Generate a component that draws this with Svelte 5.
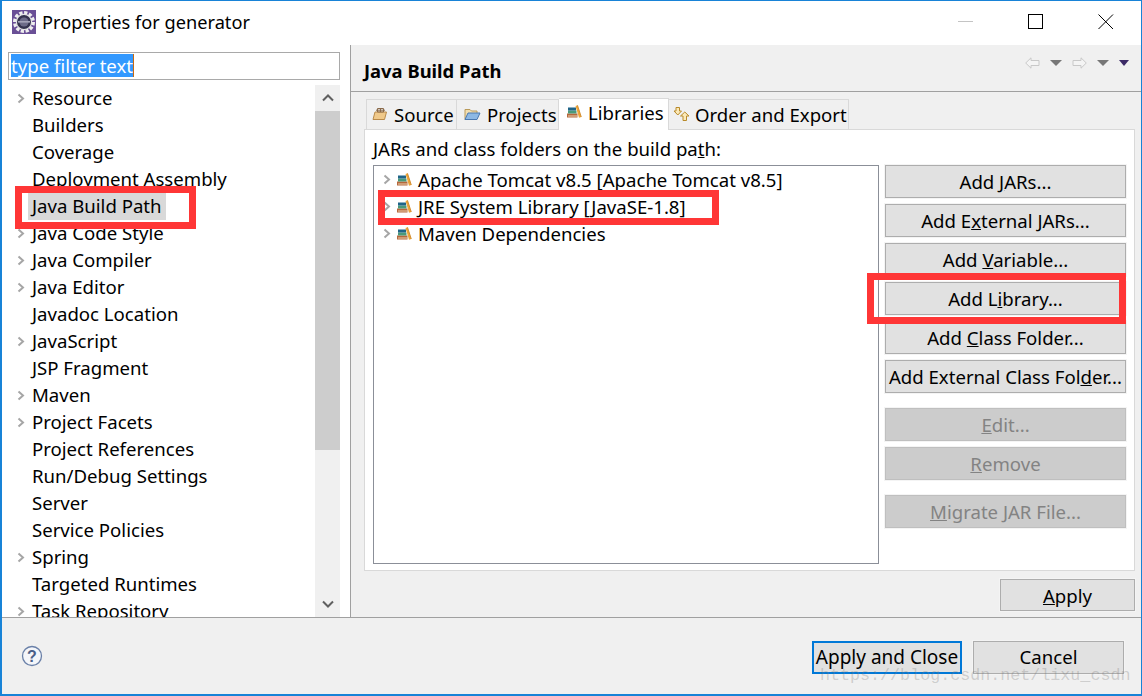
<script>
  const pages = [
    { name: 'Resource', more: true },
    { name: 'Builders' },
    { name: 'Coverage' },
    { name: 'Deployment Assembly' },
    { name: 'Java Build Path', selected: true },
    { name: 'Java Code Style', more: true },
    { name: 'Java Compiler', more: true },
    { name: 'Java Editor', more: true },
    { name: 'Javadoc Location' },
    { name: 'JavaScript', more: true },
    { name: 'JSP Fragment' },
    { name: 'Maven', more: true },
    { name: 'Project Facets', more: true },
    { name: 'Project References' },
    { name: 'Run/Debug Settings' },
    { name: 'Server' },
    { name: 'Service Policies' },
    { name: 'Spring', more: true },
    { name: 'Targeted Runtimes' },
    { name: 'Task Repository', more: true }
  ];

  const libraries = [
    'Apache Tomcat v8.5 [Apache Tomcat v8.5]',
    'JRE System Library [JavaSE-1.8]',
    'Maven Dependencies'
  ];
</script>

{#snippet chevron()}
  <svg class="chevron" width="8" height="11" viewBox="0 0 8 11">
    <path d="M1.5 1.5 L6 5.5 L1.5 9.5" fill="none" stroke="#a6a6a6" stroke-width="2" />
  </svg>
{/snippet}

{#snippet books()}
  <svg width="16" height="14" viewBox="0 0 16 14">
    <rect x="1" y="8.5" width="10.5" height="4" fill="#b5683c" />
    <rect x="2" y="10.5" width="9.5" height="1" fill="#ecd0ae" />
    <rect x="2" y="5.5" width="8.5" height="3" fill="#4a9a7a" />
    <rect x="2" y="2.5" width="8" height="3" fill="#1f6488" />
    <path d="M9.5 1 L11.5 0.3 L15.3 12 L13 12.8 Z" fill="#eda63a" />
    <path d="M11.5 0.3 L15.3 12" fill="none" stroke="#c97f1e" stroke-width="0.8" />
  </svg>
{/snippet}

<div class="window">
  <header class="titlebar">
    <svg class="app-icon" width="24" height="24" viewBox="0 0 24 24">
      <rect width="24" height="24" fill="#6a4f96" />
      <circle cx="12" cy="12" r="9.2" fill="none" stroke="#efefef" stroke-width="3.6" stroke-dasharray="3.2 1.6" />
      <circle cx="12" cy="12" r="7.6" fill="#34324e" stroke="#e4e4e4" stroke-width="1.2" />
      <circle cx="12" cy="12" r="4.6" fill="#6d6b88" />
      <rect x="6" y="11" width="12" height="1.6" fill="#a5a3b8" />
    </svg>
    <span class="title">Properties for generator</span>
    <div class="window-controls">
      <svg width="16" height="16" viewBox="0 0 16 16"><path d="M0 7.5 H15" stroke="#c4c4c4" /></svg>
      <svg width="16" height="16" viewBox="0 0 16 16"><rect x="0.5" y="0.5" width="14" height="14" fill="none" stroke="#000" /></svg>
      <svg width="16" height="16" viewBox="0 0 16 16"><path d="M0.5 0.5 L15 15 M15 0.5 L0.5 15" stroke="#000" /></svg>
    </div>
  </header>

  <div class="main">
    <aside class="left">
      <div class="filter"><span class="selected-text">type filter text</span></div>
      <div class="tree-area">
        <ul class="tree">
          {#each pages as page}
            <li class="row">
              <span class="twist">{#if page.more}{@render chevron()}{/if}</span>
              <span class="label" class:selected={page.selected}>{page.name}</span>
            </li>
          {/each}
        </ul>
        <div class="scrollbar">
          <div class="arrow">
            <svg width="12" height="8" viewBox="0 0 12 8"><path d="M1 6.5 L6 1.5 L11 6.5" fill="none" stroke="#606060" stroke-width="2" /></svg>
          </div>
          <div class="thumb"></div>
          <div class="track"></div>
          <div class="arrow">
            <svg width="12" height="8" viewBox="0 0 12 8"><path d="M1 1.5 L6 6.5 L11 1.5" fill="none" stroke="#606060" stroke-width="2" /></svg>
          </div>
        </div>
      </div>
    </aside>

    <section class="right">
      <div class="page-head">
        <h1>Java Build Path</h1>
        <div class="nav">
          <svg width="15" height="12" viewBox="0 0 15 12"><path d="M0.7 6 L6 0.8 V3.5 H14 V8.5 H6 V11.2 Z" fill="#f4f4f4" stroke="#c8c8c8" /></svg>
          <i class="drop"></i>
          <svg width="15" height="12" viewBox="0 0 15 12"><path d="M14.3 6 L9 0.8 V3.5 H1 V8.5 H9 V11.2 Z" fill="#f4f4f4" stroke="#c8c8c8" /></svg>
          <i class="drop"></i>
          <i class="drop dark"></i>
        </div>
      </div>

      <div class="page-body">
        <div class="tabs">
          <div class="tab source">
            <svg width="16" height="14" viewBox="0 0 16 14">
              <path d="M1 12.5 L3 5 H14.5 L12.5 12.5 Z" fill="#f0c98a" stroke="#b98a4a" />
              <path d="M5.5 1.5 H11.5 V5 H5.5 Z M8.5 1.5 V5 M4 3.2 H13" fill="none" stroke="#8a6a4a" />
            </svg>
            Source
          </div>
          <div class="tab projects">
            <svg width="17" height="14" viewBox="0 0 17 14">
              <path d="M1 12.5 V2.5 H6 L7.5 4 H13 V6" fill="#f2deb0" stroke="#b99a5a" />
              <path d="M1 12.5 L4 6 H16 L13 12.5 Z" fill="#8db8e4" stroke="#4a78b0" />
            </svg>
            Projects
          </div>
          <div class="tab active">{@render books()} Libraries</div>
          <div class="tab order">
            <svg width="17" height="16" viewBox="0 0 17 16">
              <path d="M3 1.5 H6.5 V5 H8.5 L4.8 9 L1 5 H3 Z" fill="#fbe9b8" stroke="#b98a2a" />
              <path d="M10 14.5 H13.5 V10 H16 L11.8 6 L7.5 10 H10 Z" fill="#fbe9b8" stroke="#b98a2a" />
            </svg>
            Order and Export
          </div>
        </div>

        <div class="tab-panel">
          <p class="panel-label">JARs and class folders on the build pa<u>t</u>h:</p>
          <div class="panel-row">
            <ul class="lib-list">
              {#each libraries as lib}
                <li class="lib">
                  {@render chevron()}
                  {@render books()}
                  <span>{lib}</span>
                </li>
              {/each}
            </ul>
            <div class="actions">
              <button>Add <u>J</u>ARs...</button>
              <button>Add E<u>x</u>ternal JARs...</button>
              <button>Add <u>V</u>ariable...</button>
              <button>Add L<u>i</u>brary...</button>
              <button>Add <u>C</u>lass Folder...</button>
              <button>Add External Class Fol<u>d</u>er...</button>
              <button class="spaced" disabled><u>E</u>dit...</button>
              <button disabled><u>R</u>emove</button>
              <button class="spaced" disabled><u>M</u>igrate JAR File...</button>
            </div>
          </div>
        </div>

        <div class="apply-row">
          <button class="apply"><u>A</u>pply</button>
        </div>
      </div>
    </section>
  </div>

  <footer class="footer">
    <svg class="help" width="22" height="22" viewBox="0 0 22 22">
      <circle cx="11" cy="11" r="9.5" fill="#f4f6fa" stroke="#6a80a8" stroke-width="1.3" />
      <text x="11" y="16.5" text-anchor="middle" class="help-mark">?</text>
    </svg>
    <div class="footer-buttons">
      <button class="default">Apply and Close</button>
      <button class="cancel">Cancel</button>
    </div>
  </footer>

  <!-- red annotation boxes drawn over the screenshot -->
  <div class="mark mark-tree"></div>
  <div class="mark mark-lib"></div>
  <div class="mark mark-btn"></div>
  <div class="watermark">https://blog.csdn.net/lixu_csdn</div>
</div>

<style>
  :global(body) {
    margin: 0;
    background: #f0f0f0;
  }

  .window {
    position: relative;
    box-sizing: border-box;
    width: 1142px;
    height: 696px;
    display: flex;
    flex-direction: column;
    overflow: hidden;
    border: solid #1883d7;
    border-width: 1px 1px 2px 2px;
    background: #fff;
    font-family: "Noto Sans", "Open Sans", sans-serif;
    font-size: 18.6px;
    color: #000;
  }

  .titlebar {
    height: 44px;
    flex: none;
    display: flex;
    align-items: center;
    padding: 0 0 2px 10px;
    box-sizing: border-box;
    background: #fff;
  }

  .title {
    margin-left: 6px;
    font-size: 18.2px;
  }

  .window-controls {
    margin-left: auto;
    display: flex;
    gap: 54px;
    padding-right: 27px;
  }

  .main {
    flex: 1;
    display: flex;
    min-height: 0;
  }

  .left {
    width: 348px;
    flex: none;
    box-sizing: border-box;
    padding: 7px 10px 0 6px;
    display: flex;
    flex-direction: column;
    background: #fff;
  }

  .filter {
    height: 28px;
    flex: none;
    box-sizing: border-box;
    border: 1px solid #a9a9a9;
    padding: 0 0 2px 2px;
    display: flex;
    align-items: center;
  }

  .selected-text {
    background: #3399ff;
    color: #fff;
    line-height: 23px;
    border-right: 1px solid #c86a10;
  }

  .tree-area {
    flex: 1;
    min-height: 0;
    display: flex;
    margin-top: 5px;
  }

  .tree {
    flex: 1;
    list-style: none;
    margin: 0;
    padding: 0 0 0 9px;
    overflow: hidden;
  }

  .row {
    height: 27px;
    display: flex;
    align-items: center;
  }

  .twist {
    width: 11px;
    flex: none;
    display: flex;
  }

  .label {
    padding: 0 4px 2px;
    line-height: 25px;
    white-space: nowrap;
  }

  .label.selected {
    background: #d9d9d9;
  }

  .scrollbar {
    width: 25px;
    flex: none;
    display: flex;
    flex-direction: column;
    background: #f0f0f0;
  }

  .arrow {
    height: 26px;
    flex: none;
    display: flex;
    align-items: center;
    justify-content: center;
  }

  .thumb {
    height: 339px;
    flex: none;
    background: #cdcdcd;
  }

  .track {
    flex: 1;
  }

  .right {
    flex: 1;
    min-width: 0;
    display: flex;
    flex-direction: column;
    border-left: 1px solid #a0a0a0;
    background: #f0f0f0;
  }

  .page-head {
    height: 47px;
    flex: none;
    box-sizing: border-box;
    display: flex;
    justify-content: space-between;
    border-bottom: 1px solid #a0a0a0;
    padding: 0 12px 0 13px;
  }

  h1 {
    margin: 13px 0 0;
    font-size: 18.4px;
    line-height: 26px;
    font-weight: 700;
  }

  .nav {
    display: flex;
    align-items: center;
    gap: 10px;
    height: 36px;
  }

  .drop {
    width: 0;
    height: 0;
    border: 6px solid transparent;
    border-top: 6px solid #777;
    border-bottom: 0;
  }

  .drop.dark {
    border-width: 6px 5px 0;
    border-top-color: #3c2a66;
  }

  .page-body {
    flex: 1;
    min-height: 0;
    padding: 7px 6px 0 13px;
    display: flex;
    flex-direction: column;
  }

  .tabs {
    height: 30px;
    flex: none;
    display: flex;
    align-items: flex-end;
    padding-left: 2px;
  }

  .tab {
    height: 30px;
    box-sizing: border-box;
    display: flex;
    align-items: center;
    gap: 6px;
    padding: 0 0 1px 6px;
    background: #f0f0f0;
    border: 1px solid #d9d9d9;
    border-bottom: 0;
    border-left: 0;
    white-space: nowrap;
  }

  .tab.source {
    width: 91px;
    padding-left: 5px;
    border-left: 1px solid #d9d9d9;
  }

  .tab.projects {
    width: 102px;
    padding-left: 7px;
  }

  .tab.active {
    width: 110px;
    height: 32px;
    background: #fff;
    margin-bottom: -1px;
    position: relative;
    padding: 0 0 5px 7px;
    z-index: 1;
  }

  .tab.order {
    width: 180px;
    gap: 5px;
    padding-left: 4px;
  }

  .tab-panel {
    height: 442px;
    flex: none;
    box-sizing: border-box;
    background: #fff;
    border: 1px solid #d9d9d9;
    padding: 7px 8px 6px 8px;
    display: flex;
    flex-direction: column;
  }

  .panel-label {
    margin: 0;
    line-height: 24px;
    height: 28px;
    flex: none;
  }

  .panel-row {
    flex: 1;
    min-height: 0;
    display: flex;
    gap: 6px;
  }

  .lib-list {
    width: 506px;
    flex: none;
    box-sizing: border-box;
    list-style: none;
    margin: 0;
    padding: 0 0 0 9px;
    border: 1px solid #8b8f98;
  }

  .lib {
    height: 27px;
    display: flex;
    align-items: center;
    gap: 5px;
    white-space: nowrap;
  }

  .lib span {
    margin-left: 1px;
  }

  .actions {
    flex: 1;
    display: flex;
    flex-direction: column;
    gap: 6px;
  }

  button {
    box-sizing: border-box;
    height: 33px;
    padding: 0;
    flex: none;
    font: inherit;
    color: #000;
    background: #e1e1e1;
    border: 1px solid #adadad;
    outline: 1px solid #f4f4f4;
  }

  button:disabled {
    background: #cccccc;
    border-color: #bfbfbf;
    color: #838383;
  }

  .spaced {
    margin-top: 9px;
  }

  .apply-row {
    display: flex;
    justify-content: flex-end;
    margin-top: 8px;
  }

  .apply {
    width: 135px;
    height: 32px;
  }

  .footer {
    height: 77px;
    flex: none;
    box-sizing: border-box;
    display: flex;
    align-items: center;
    justify-content: space-between;
    border-top: 1px solid #a0a0a0;
    background: #f0f0f0;
    padding: 0 17px 0 19px;
  }

  .help-mark {
    font-family: "Liberation Sans", sans-serif;
    font-size: 16px;
    font-weight: 700;
    fill: #4a5f88;
  }

  .footer-buttons {
    display: flex;
    gap: 11px;
    margin-top: 2px;
  }

  .footer-buttons button {
    width: 151px;
  }

  .footer-buttons .cancel {
    padding-bottom: 2px;
  }

  .footer-buttons .default {
    border: 2px solid #0078d7;
    outline: 0;
    width: 150px;
    font-size: 19px;
  }

  .mark {
    position: absolute;
    box-sizing: border-box;
    border: 7px solid #ff3636;
  }

  .mark-tree {
    left: 13px;
    top: 185px;
    width: 181px;
    height: 43px;
  }

  .mark-lib {
    left: 376px;
    top: 189px;
    width: 341px;
    height: 35px;
  }

  .mark-btn {
    left: 865px;
    top: 272px;
    width: 259px;
    height: 51px;
  }

  .watermark {
    position: absolute;
    left: 818px;
    top: 665px;
    font-family: "Liberation Mono", monospace;
    font-size: 16.7px;
    color: rgba(120, 120, 120, 0.3);
    white-space: nowrap;
  }
</style>
